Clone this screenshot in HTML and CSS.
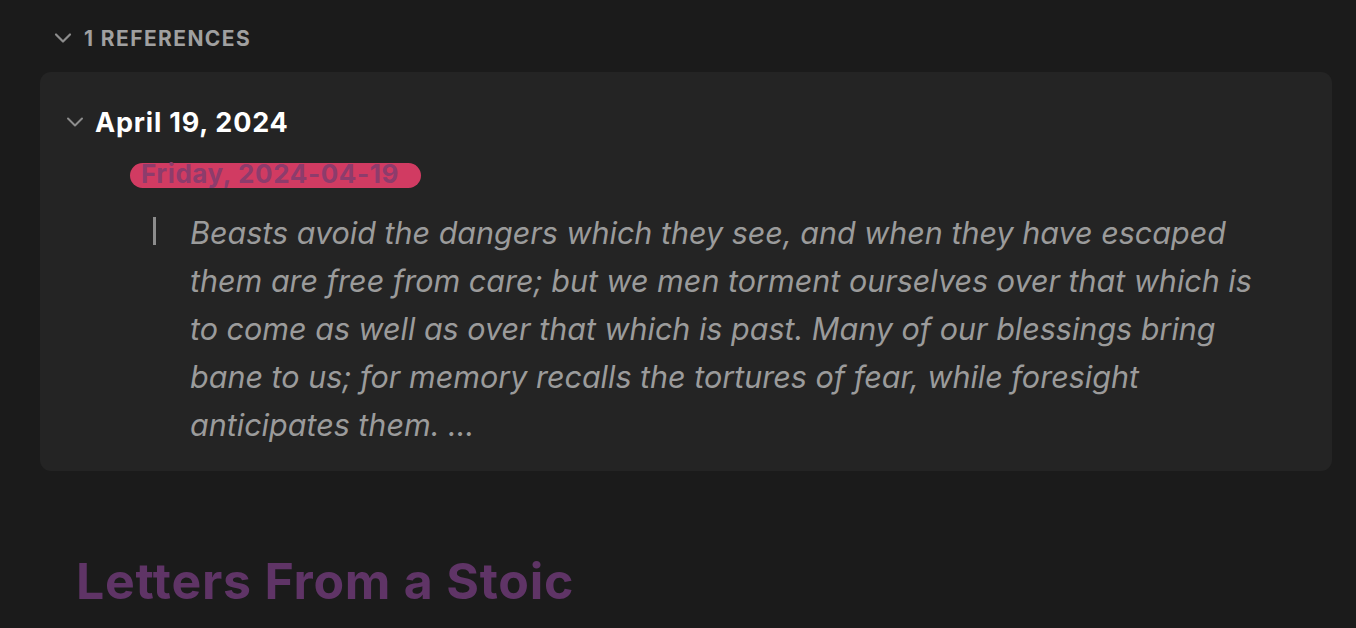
FILE: index.html
```html
<!DOCTYPE html>
<html>
<head>
<meta charset="utf-8">
<link rel="stylesheet" href="styles.css">
</head>
<body>
<div class="page">
  <div class="refs-header">
    <svg class="chev" width="18" height="12" viewBox="0 0 18 12"><path d="M2 2.5 L9 9.5 L16 2.5" fill="none" stroke="#8c8c8c" stroke-width="2.2" stroke-linecap="round" stroke-linejoin="round"/></svg>
    <span class="refs-title">1 REFERENCES</span>
  </div>
  <div class="card">
    <div class="date-row">
      <svg class="chev2" width="18" height="12" viewBox="0 0 18 12"><path d="M2 2.5 L9 9.5 L16 2.5" fill="none" stroke="#8c8c8c" stroke-width="2" stroke-linecap="round" stroke-linejoin="round"/></svg>
      <span class="date-title">April 19, 2024</span>
    </div>
    <div class="pill-row"><span class="pill">Friday, 2024-04-19</span></div>
    <blockquote class="quote">Beasts avoid the dangers which they see, and when they have escaped them are free from care; but we men torment ourselves over that which is to come as well as over that which is past. Many of our blessings bring bane to us; for memory recalls the tortures of fear, while foresight anticipates them. ...</blockquote>
  </div>
  <h1 class="doc-title">Letters From a Stoic</h1>
</div>
</body>
</html>
```
FILE: styles.css
```css
html, body {
  margin: 0;
  padding: 0;
  background: #1b1b1b;
  font-family: "Inter", "Noto Sans", sans-serif;
}
.page {
  padding: 20px 24px 0 40px;
  height: 628px;
  box-sizing: border-box;
  overflow: hidden;
}
.refs-header {
  display: flex;
  align-items: center;
  height: 36px;
  padding-left: 14px;
  gap: 12px;
}
.refs-title {
  color: #a0a0a0;
  font-weight: 700;
  font-size: 21px;
  letter-spacing: 1.4px;
}
.card {
  margin-top: 16px;
  background: #242424;
  border-radius: 11px;
  padding: 32px 0 22px 0;
}
.date-row {
  display: flex;
  align-items: center;
  padding-left: 26px;
  gap: 11px;
  height: 36px;
}
.date-title {
  color: #ffffff;
  font-weight: 700;
  font-size: 27px;
  letter-spacing: 0.8px;
}
.pill-row {
  padding-left: 90px;
  margin-top: 23px;
  height: 25px;
  display: flex;
  align-items: flex-start;
}
.pill {
  display: inline-block;
  background: #d13b62;
  color: #8d3c6c;
  font-weight: 700;
  font-size: 26px;
  letter-spacing: 0.6px;
  line-height: 22px;
  padding: 0 22px 3px 11px;
  border-radius: 13px;
}
.quote {
  margin: 21px 0 0 113px;
  padding-left: 34px;
  border-left: 3px solid #8c8c8c;
  border-image: linear-gradient(to bottom, transparent 0, transparent 9px, #8c8c8c 9px, #8c8c8c 37px, transparent 37px) 1;
  color: #9b9b9b;
  font-style: italic;
  font-size: 30.5px;
  line-height: 48px;
  max-width: 1090px;
}
.doc-title {
  margin: 82px 0 0 36px;
  color: #5f3466;
  font-weight: 700;
  font-size: 50px;
  letter-spacing: 0.75px;
  line-height: 56px;
}
```
